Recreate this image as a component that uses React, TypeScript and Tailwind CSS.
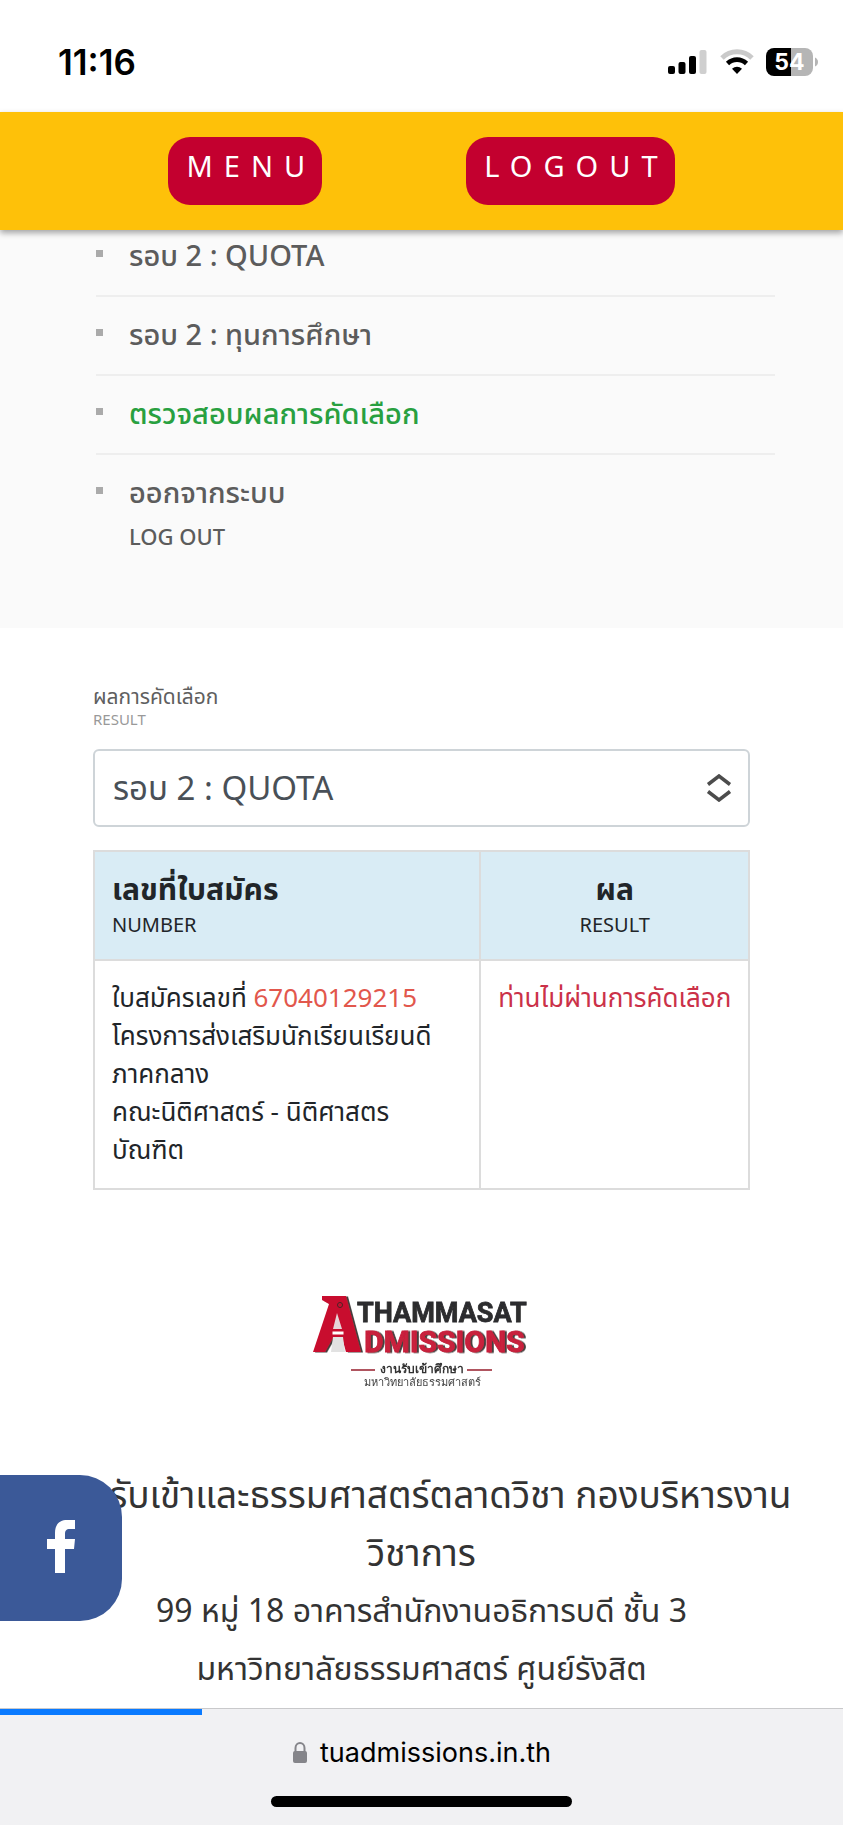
import React from "react";

const thai = "font-['Noto_Sans','Noto_Sans_Thai','Loma',sans-serif]";

const menuItems = [
  { label: "รอบ 2 : QUOTA", active: false },
  { label: "รอบ 2 : ทุนการศึกษา", active: false },
  { label: "ตรวจสอบผลการคัดเลือก", active: true },
  { label: "ออกจากระบบ", sub: "LOG OUT", active: false },
];

function StatusBar() {
  return (
    <div className="flex h-28 items-center justify-between bg-white pt-3 pr-6 pl-[58px] font-['Inter',sans-serif]">
      <span className="text-[35px] font-semibold text-black">11:16</span>
      <div className="flex items-center gap-3">
        <svg width="40" height="26" viewBox="0 0 40 26" aria-hidden="true">
          <rect x="0" y="17" width="7" height="8" rx="2" />
          <rect x="10.500" y="13" width="7" height="12" rx="2" />
          <rect x="21" y="7" width="7" height="18" rx="2" />
          <rect x="31.500" y="1" width="7" height="24" rx="2" fill="#cfcfcf" />
        </svg>
        <svg width="34" height="26" viewBox="0 0 34 26" aria-hidden="true">
          <path d="M2 9C10.500 0.800 23.500 0.800 32 9" fill="none" stroke="#cacaca" strokeWidth="5" />
          <path d="M7.500 14.500C13 9.300 21 9.300 26.500 14.500" fill="none" stroke="#000" strokeWidth="4.600" />
          <path d="M12 19.800C15 17 19 17 22 19.800L17 25Z" />
        </svg>
        <svg width="53" height="28" viewBox="0 0 53 28" aria-hidden="true">
          <path d="M8 0H25V28H8A8 8 0 0 1 0 20V8A8 8 0 0 1 8 0Z" />
          <path d="M25 0H39A8 8 0 0 1 47 8V20A8 8 0 0 1 39 28H25Z" fill="#b5b5b5" />
          <path d="M49 9.500Q52 11 52 14T49 18.500Z" fill="#b5b5b5" />
          <text x="23.500" y="22" textAnchor="middle" fontSize="23" fontWeight="700" fill="#fff" fontFamily="Inter, sans-serif">54</text>
        </svg>
      </div>
    </div>
  );
}

function Logo() {
  return (
    <svg width="218" height="96" viewBox="0 0 218 96" role="img" aria-label="Thammasat Admissions">
      <defs>
        <filter id="soft" x="-5%" y="-5%" width="110%" height="110%">
          <feGaussianBlur stdDeviation="0.7" />
        </filter>
        <filter id="shade" x="-5%" y="-10%" width="110%" height="120%">
          <feDropShadow dx="2" dy="0.500" stdDeviation="0.300" floodColor="#33282b" floodOpacity="0.900" />
        </filter>
      </defs>
      <g filter="url(#soft)">
        <g filter="url(#shade)">
          <path d="M9 1H33L48 57H33L29 43H20L12 57H0L16 9L9 5Z" fill="#c8102e" />
        </g>
        <path d="M24 18L29 34H20Z" fill="#e6d5d8" />
        <path d="M20 42H30L32 57H18Z" fill="#e2e2e2" />
        <path d="M19 36H31V40H19Z" fill="#fff" stroke="#c8102e" />
        <circle cx="27" cy="10" r="2.500" fill="#c8102e" stroke="#4c2028" />
        <g fontFamily="Roboto, sans-serif" fontWeight="700" strokeWidth="0.800">
          <text x="44" y="27" fontSize="27" fill="#2d2d2f" stroke="#2d2d2f">THAMMASAT</text>
          <text x="51" y="57" fontSize="30" fill="#c8203c" stroke="#c8203c" filter="url(#shade)">DMISSIONS</text>
        </g>
        <path d="M38 75H62M154 75H179" stroke="#b05560" strokeWidth="2" />
        <text x="109" y="78" textAnchor="middle" fontSize="12" fontWeight="700" fill="#333" fontFamily="Noto Sans, sans-serif">งานรับเข้าศึกษา</text>
        <text x="109" y="91" textAnchor="middle" fontSize="11" fill="#444" fontFamily="Noto Sans, sans-serif">มหาวิทยาลัยธรรมศาสตร์</text>
      </g>
    </svg>
  );
}

export default function App() {
  return (
    <div className={`flex min-h-screen flex-col bg-white ${thai}`}>
      <StatusBar />
      <header className="relative z-10 flex h-[118px] items-start justify-center gap-36 bg-[#fec109] pt-[25px] shadow-[0_3px_6px_rgba(0,0,0,0.35)]">
        <button className="h-[68px] rounded-[22px] bg-[#c3002f] pr-[6px] pb-[10px] pl-[18px] text-[29px] tracking-[11px] text-white">MENU</button>
        <button className="h-[68px] rounded-[22px] bg-[#c3002f] pr-[6px] pb-[10px] pl-[18px] text-[29px] tracking-[11px] text-white">LOGOUT</button>
      </header>

      <nav className="h-[398px] bg-[#fafafa] pr-[68px] pl-24">
        <ul>
          {menuItems.map((item, i) => (
            <li key={item.label} className={`flex gap-[26px] ${i === 0 ? "h-[67px] pt-[5px]" : i === 3 ? "h-[120px] pt-[17px]" : "h-[79px] pt-[17px]"} ${i < 3 ? "border-b-2 border-[#eeeeee]" : ""}`}>
              <span className="mt-[15px] size-[7px] shrink-0 bg-[#aaaaaa]" />
              <a href="#" className={`text-[29px] leading-[40px] font-medium ${item.active ? "text-[#28a040]" : "text-[#5c5c5c]"}`}>
                {item.label}
                {item.sub && <span className="block text-[22px] leading-[48px]">{item.sub}</span>}
              </a>
            </li>
          ))}
        </ul>
      </nav>

      <main className="px-[93px] pt-[54px]">
        <label htmlFor="round" className="block text-[21px] leading-7 text-[#5f5f5f]">
          ผลการคัดเลือก
          <span className="block text-[15px] leading-[18px] text-[#999999]">RESULT</span>
        </label>
        <div className="relative mt-[21px]">
          <select id="round" className="h-[78px] w-full appearance-none rounded-md border-2 border-[#ced4d8] bg-white px-[18px] text-[33px] text-[#495057]">
            <option>รอบ 2 : QUOTA</option>
          </select>
          <svg className="pointer-events-none absolute top-[25px] right-[18px]" width="26" height="28" viewBox="0 0 26 28" fill="none" stroke="#4c4c4c" strokeWidth="3.500" aria-hidden="true">
            <path d="M2 10.500L13 2L24 10.500M2 17.500L13 26L24 17.500" />
          </svg>
        </div>
        <table className="mt-[23px] w-full table-fixed border-collapse border-2 border-[#dcdcdc] text-[26px] text-[#212529]">
          <colgroup>
            <col className="w-[59%]" />
            <col className="w-[41%]" />
          </colgroup>
          <thead>
            <tr className="h-[109px] bg-[#d9ecf5] align-top">
              <th className="border-2 border-[#dcdcdc] px-[17px] pt-[19px] text-left text-[30px] leading-9 font-bold">
                เลขที่ใบสมัคร
                <span className="block text-[20px] font-normal">NUMBER</span>
              </th>
              <th className="border-2 border-[#dcdcdc] px-[17px] pt-[19px] text-center text-[30px] leading-9 font-bold">
                ผล
                <span className="block text-[20px] font-normal">RESULT</span>
              </th>
            </tr>
          </thead>
          <tbody>
            <tr className="h-[229px] align-top leading-[38px]">
              <td className="border-2 border-[#dcdcdc] px-[17px] pt-[17px] whitespace-nowrap">
                ใบสมัครเลขที่ <span className="text-[#e2574c]">67040129215</span><br />
                โครงการส่งเสริมนักเรียนเรียนดี<br />ภาคกลาง<br />
                คณะนิติศาสตร์ - นิติศาสตร<br />บัณฑิต
              </td>
              <td className="border-2 border-[#dcdcdc] pt-[17px] text-center whitespace-nowrap text-[#cb3148]">ท่านไม่ผ่านการคัดเลือก</td>
            </tr>
          </tbody>
        </table>
      </main>

      <footer className="flex flex-col items-center pt-[105px] pb-2">
        <Logo />
        <div className="relative mt-[74px] w-full text-center text-[32px] leading-[58px] text-[#333333]">
          <p className="text-[37px] whitespace-nowrap">งานรับเข้าและธรรมศาสตร์ตลาดวิชา กองบริหารงาน<br />วิชาการ</p>
          <p>99 หมู่ 18 อาคารสำนักงานอธิการบดี ชั้น 3</p>
          <p>มหาวิทยาลัยธรรมศาสตร์ ศูนย์รังสิต</p>
          <a href="#" aria-label="Facebook" className="absolute top-[10px] left-0 flex h-[146px] w-[122px] items-center justify-center rounded-r-[42px] bg-[#3b5998] pb-1">
            <svg width="28" height="53" viewBox="0 0 28 53" fill="#fff" aria-hidden="true">
              <path d="M8 53V29H0V19H8V13C8 4 13 0 20 0H28V9H23C19 9 18 11 18 14V19H28L27 29H18V53Z" />
            </svg>
          </a>
        </div>
      </footer>

      <div className="mt-auto flex h-[117px] flex-col items-center border-t border-[#c9c9cb] bg-[#f1f1f3] font-['Inter',sans-serif]">
        <div className="h-[6px] w-full"><div className="h-full w-[24%] bg-[#0a7aff]" /></div>
        <div className="mt-[15px] flex items-center gap-3 text-[27px] leading-[46px] text-black">
          <svg width="16" height="22" viewBox="0 0 16 22" aria-hidden="true">
            <path d="M3.500 10V6A4.500 5 0 0 1 12.500 6V10" fill="none" stroke="#85858a" strokeWidth="2" />
            <rect x="1" y="9" width="14" height="12" rx="2" fill="#85858a" />
          </svg>
          <span>tuadmissions.in.th</span>
        </div>
        <div className="mt-5 h-[11px] w-[301px] rounded-full bg-black" />
      </div>
    </div>
  );
}
